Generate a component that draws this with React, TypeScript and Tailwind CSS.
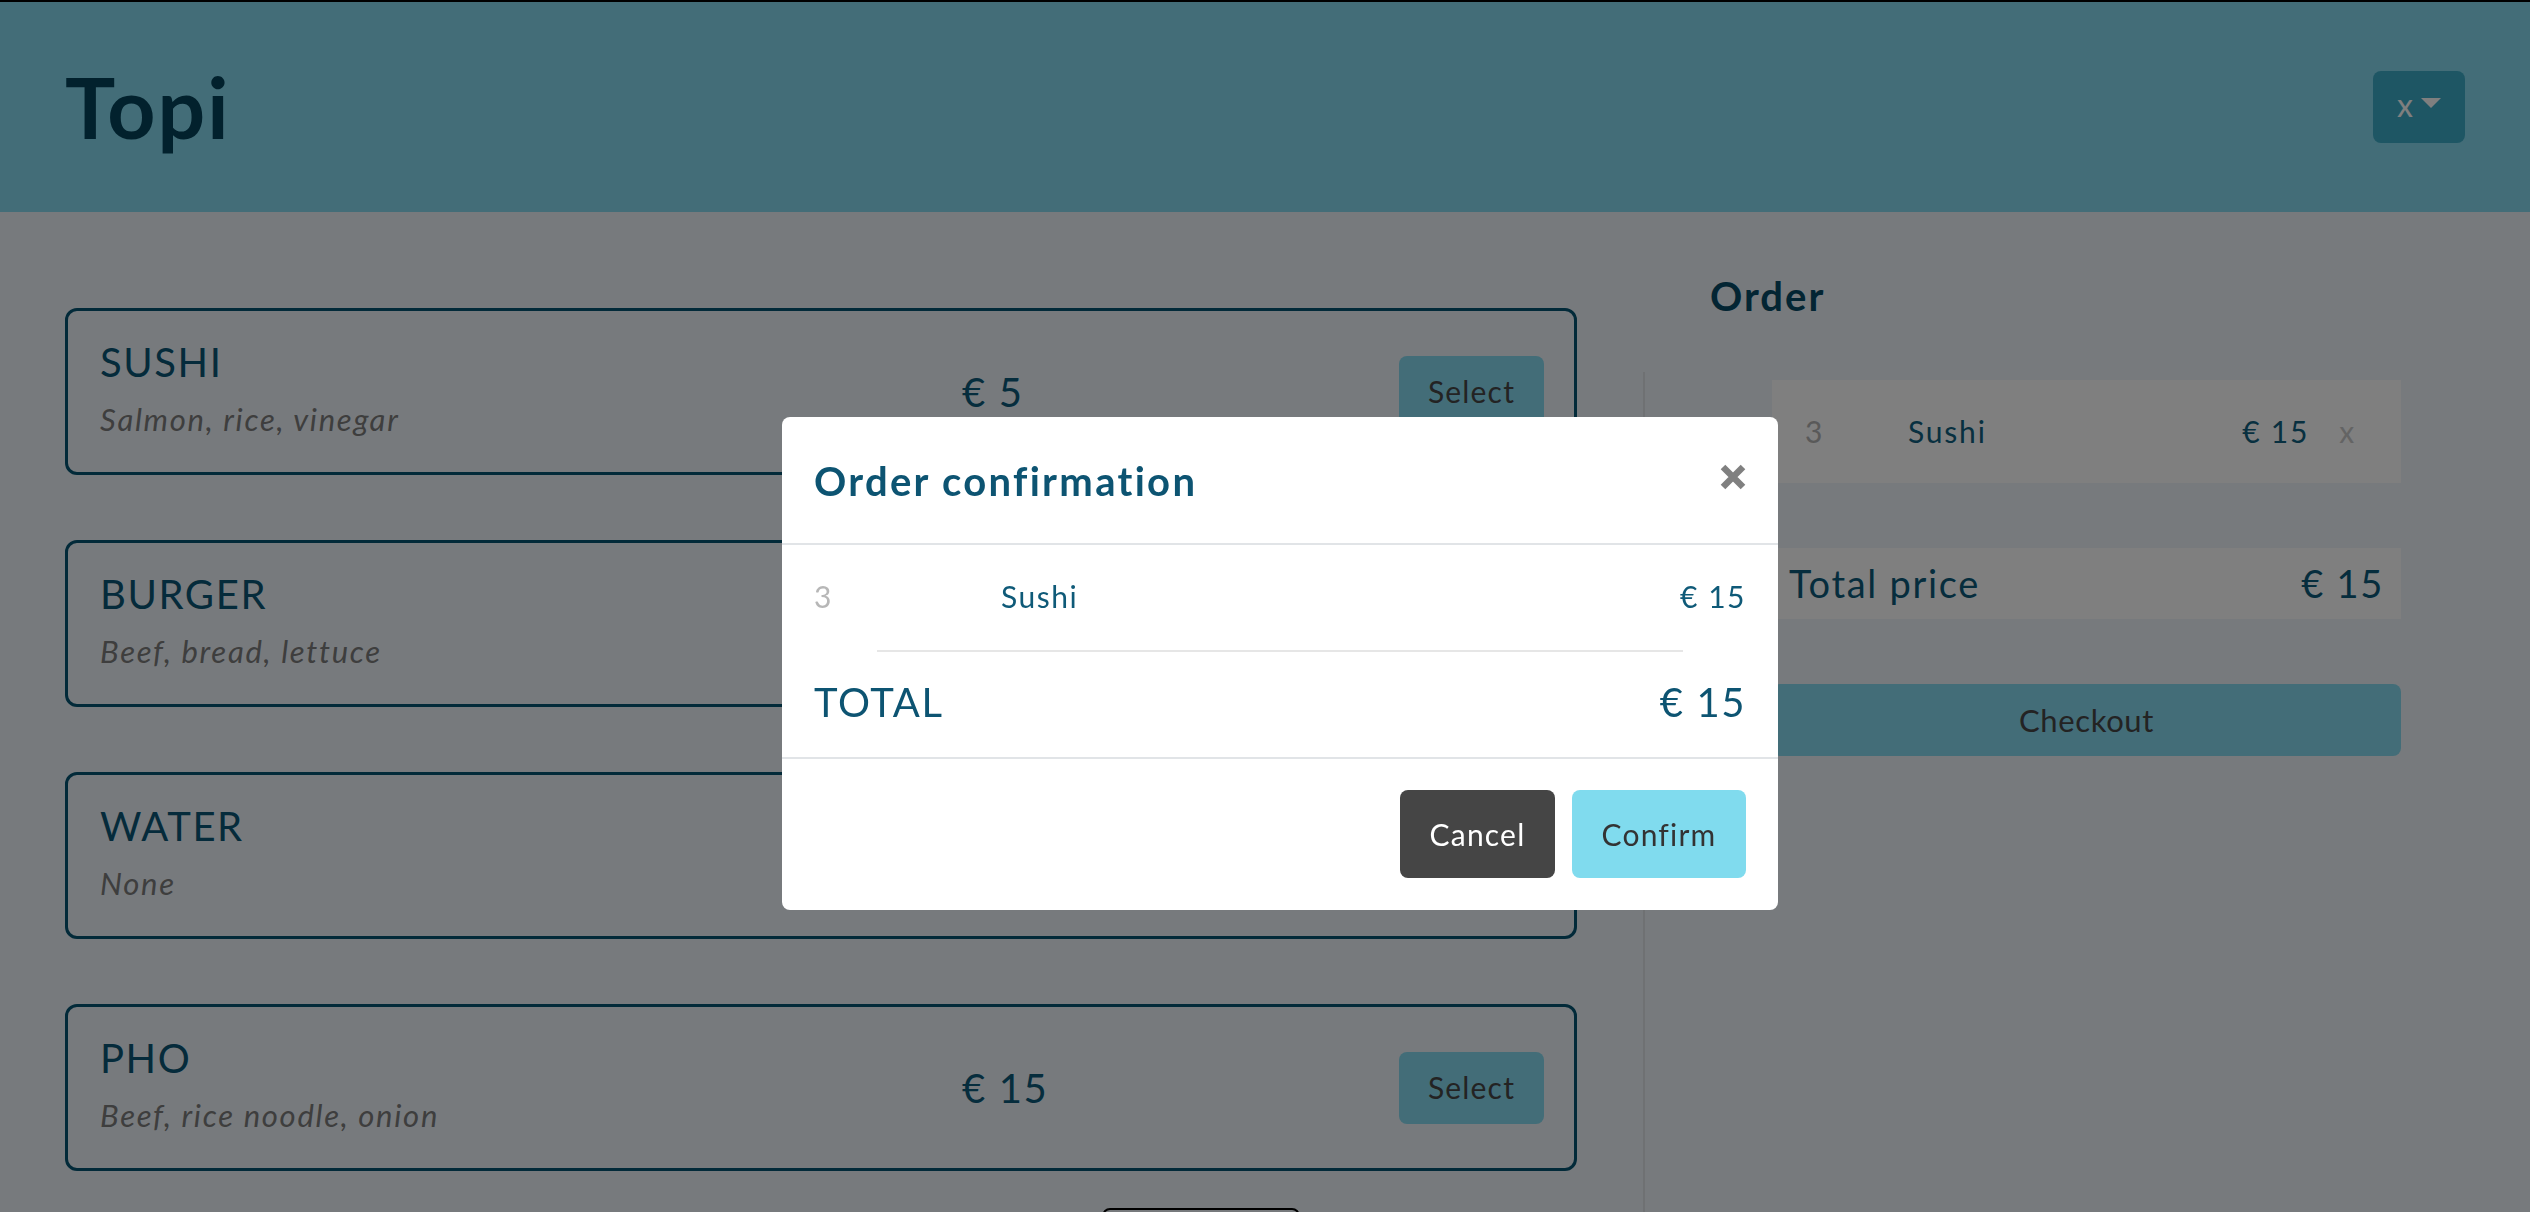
import React from "react";

const menu = [
  { name: "SUSHI", desc: "Salmon, rice, vinegar", price: "€ 5" },
  { name: "BURGER", desc: "Beef, bread, lettuce", price: "€ 10" },
  { name: "WATER", desc: "None", price: "€ 2" },
  { name: "PHO", desc: "Beef, rice noodle, onion", price: "€ 15" },
];

function MenuCard({ name, desc, price }: { name: string; desc: string; price: string }) {
  return (
    <div className="flex h-[167px] items-center rounded-[12px] border-[3px] border-[#055473] pl-[32px] pr-[30px]">
      <div className="mb-[10px] flex w-[862px] flex-col">
        <div className="text-[40px] leading-[60px] tracking-[1.6px] text-[#0a5676]">{name}</div>
        <div className="mt-[5px] text-[31px] italic leading-[44px] tracking-[0.055em] text-[#7c7c7c]">{desc}</div>
      </div>
      <div className="flex-1 text-[40px] leading-[48px] tracking-[0.04em] text-[#0c5a7a]">{price}</div>
      <button className="flex h-[72px] w-[145px] items-center justify-center rounded-[8px] bg-[#86daf0] text-[30px] tracking-[0.04em] text-[#474747]">
        Select
      </button>
    </div>
  );
}

export default function App() {
  return (
    <div className="relative min-h-screen bg-[#eff5fb] font-[Lato,sans-serif]">
      <header className="flex h-[212px] items-center justify-between border-t-2 border-black bg-[#86daf0] px-[65px]">
        <h1 className="text-[84px] font-bold leading-[1.2] tracking-[2px] text-[#04435a]">Topi</h1>
        <button className="flex h-[72px] w-[92px] items-center justify-center rounded-[8px] bg-[#3cacc8] text-[32px] leading-none text-white">
          <span className="mb-[4px]">x</span>
          <span className="mb-[8px] ml-[8px] h-0 w-0 border-x-[10px] border-t-[10px] border-x-transparent border-t-white" />
        </button>
      </header>

      <main className="flex px-[65px] pt-[60px]">
        <div className="flex w-[1512px] flex-col pt-[36px]">
          <div className="flex flex-col gap-[65px]">
            {menu.map((m) => (
              <MenuCard key={m.name} {...m} />
            ))}
          </div>
          <button className="ml-[1037px] mt-[37px] h-[60px] w-[198px] rounded-[8px] border-2 border-black" />
        </div>

        <div className="ml-[66px] flex flex-1 flex-col">
          <h2 className="pl-[67px] text-[40px] font-bold leading-[48px] tracking-[2px] text-[#074a66]">Order</h2>
          <div className="mt-[52px] flex flex-1 flex-col border-l-2 border-[#dee2e6] pl-[127px] pr-[64px] pt-[8px]">
            <div className="flex h-[103px] items-center bg-white pl-[33px] pr-[45px] text-[30px] tracking-[0.06em]">
              <span className="w-[103px] text-[#b3b3b3]">3</span>
              <span className="flex-1 text-[#106080]">Sushi</span>
              <span className="text-[#106080]">€ 15</span>
              <span className="ml-[30px] text-[#c8c8c8]">x</span>
            </div>
            <div className="mt-[65px] flex h-[71px] items-center justify-between bg-white px-[17px] text-[38px] tracking-[0.045em] text-[#0c5a7a]">
              <span>Total price</span>
              <span>€ 15</span>
            </div>
            <button className="mt-[65px] flex h-[72px] items-center justify-center rounded-[8px] bg-[#86daf0] text-[31px] tracking-[0.02em] text-[#464646]">
              Checkout
            </button>
          </div>
        </div>
      </main>

      <div className="fixed inset-0 z-10 bg-black/50" />

      <div className="fixed inset-0 z-20 flex items-start justify-center pl-[30px] pt-[417px]">
        <div className="w-[996px] overflow-hidden rounded-[8px] bg-white">
          <div className="flex h-[128px] items-center justify-between border-b-2 border-[#e1e4e7] px-8">
            <h3 className="pt-[2px] text-[40px] font-bold leading-[60px] tracking-[2.3px] text-[#0d5472]">Order confirmation</h3>
            <svg width="26" height="26" viewBox="0 0 26 26" className="mt-[-6px]">
              <path d="M3 3 L23 23 M23 3 L3 23" stroke="#808080" strokeWidth="6.5" strokeLinecap="butt" />
            </svg>
          </div>
          <div className="px-8 pb-[25px] pt-[29px]">
            <div className="flex text-[30px] leading-[45px] tracking-[0.05em]">
              <span className="w-[187px] text-[#b7b7b7]">3</span>
              <span className="flex-1 text-[#0f5a78]">Sushi</span>
              <span className="text-[#0f5a78]">€ 15</span>
            </div>
            <div className="mx-[63px] mt-[31px] border-t-2 border-[#e6e6e6]" />
            <div className="mt-[20px] flex justify-between text-[40px] leading-[60px] tracking-[0.04em] text-[#0d5472]">
              <span>TOTAL</span>
              <span>€ 15</span>
            </div>
          </div>
          <div className="flex justify-end gap-[17px] border-t-2 border-[#e1e4e7] px-8 pb-[32px] pt-[31px]">
            <button className="flex h-[88px] w-[155px] items-center justify-center rounded-[8px] bg-[#454545] text-[30px] tracking-[0.04em] text-white">
              Cancel
            </button>
            <button className="flex h-[88px] w-[174px] items-center justify-center rounded-[8px] bg-[#80dbee] text-[30px] tracking-[0.04em] text-[#333333]">
              Confirm
            </button>
          </div>
        </div>
      </div>
    </div>
  );
}
